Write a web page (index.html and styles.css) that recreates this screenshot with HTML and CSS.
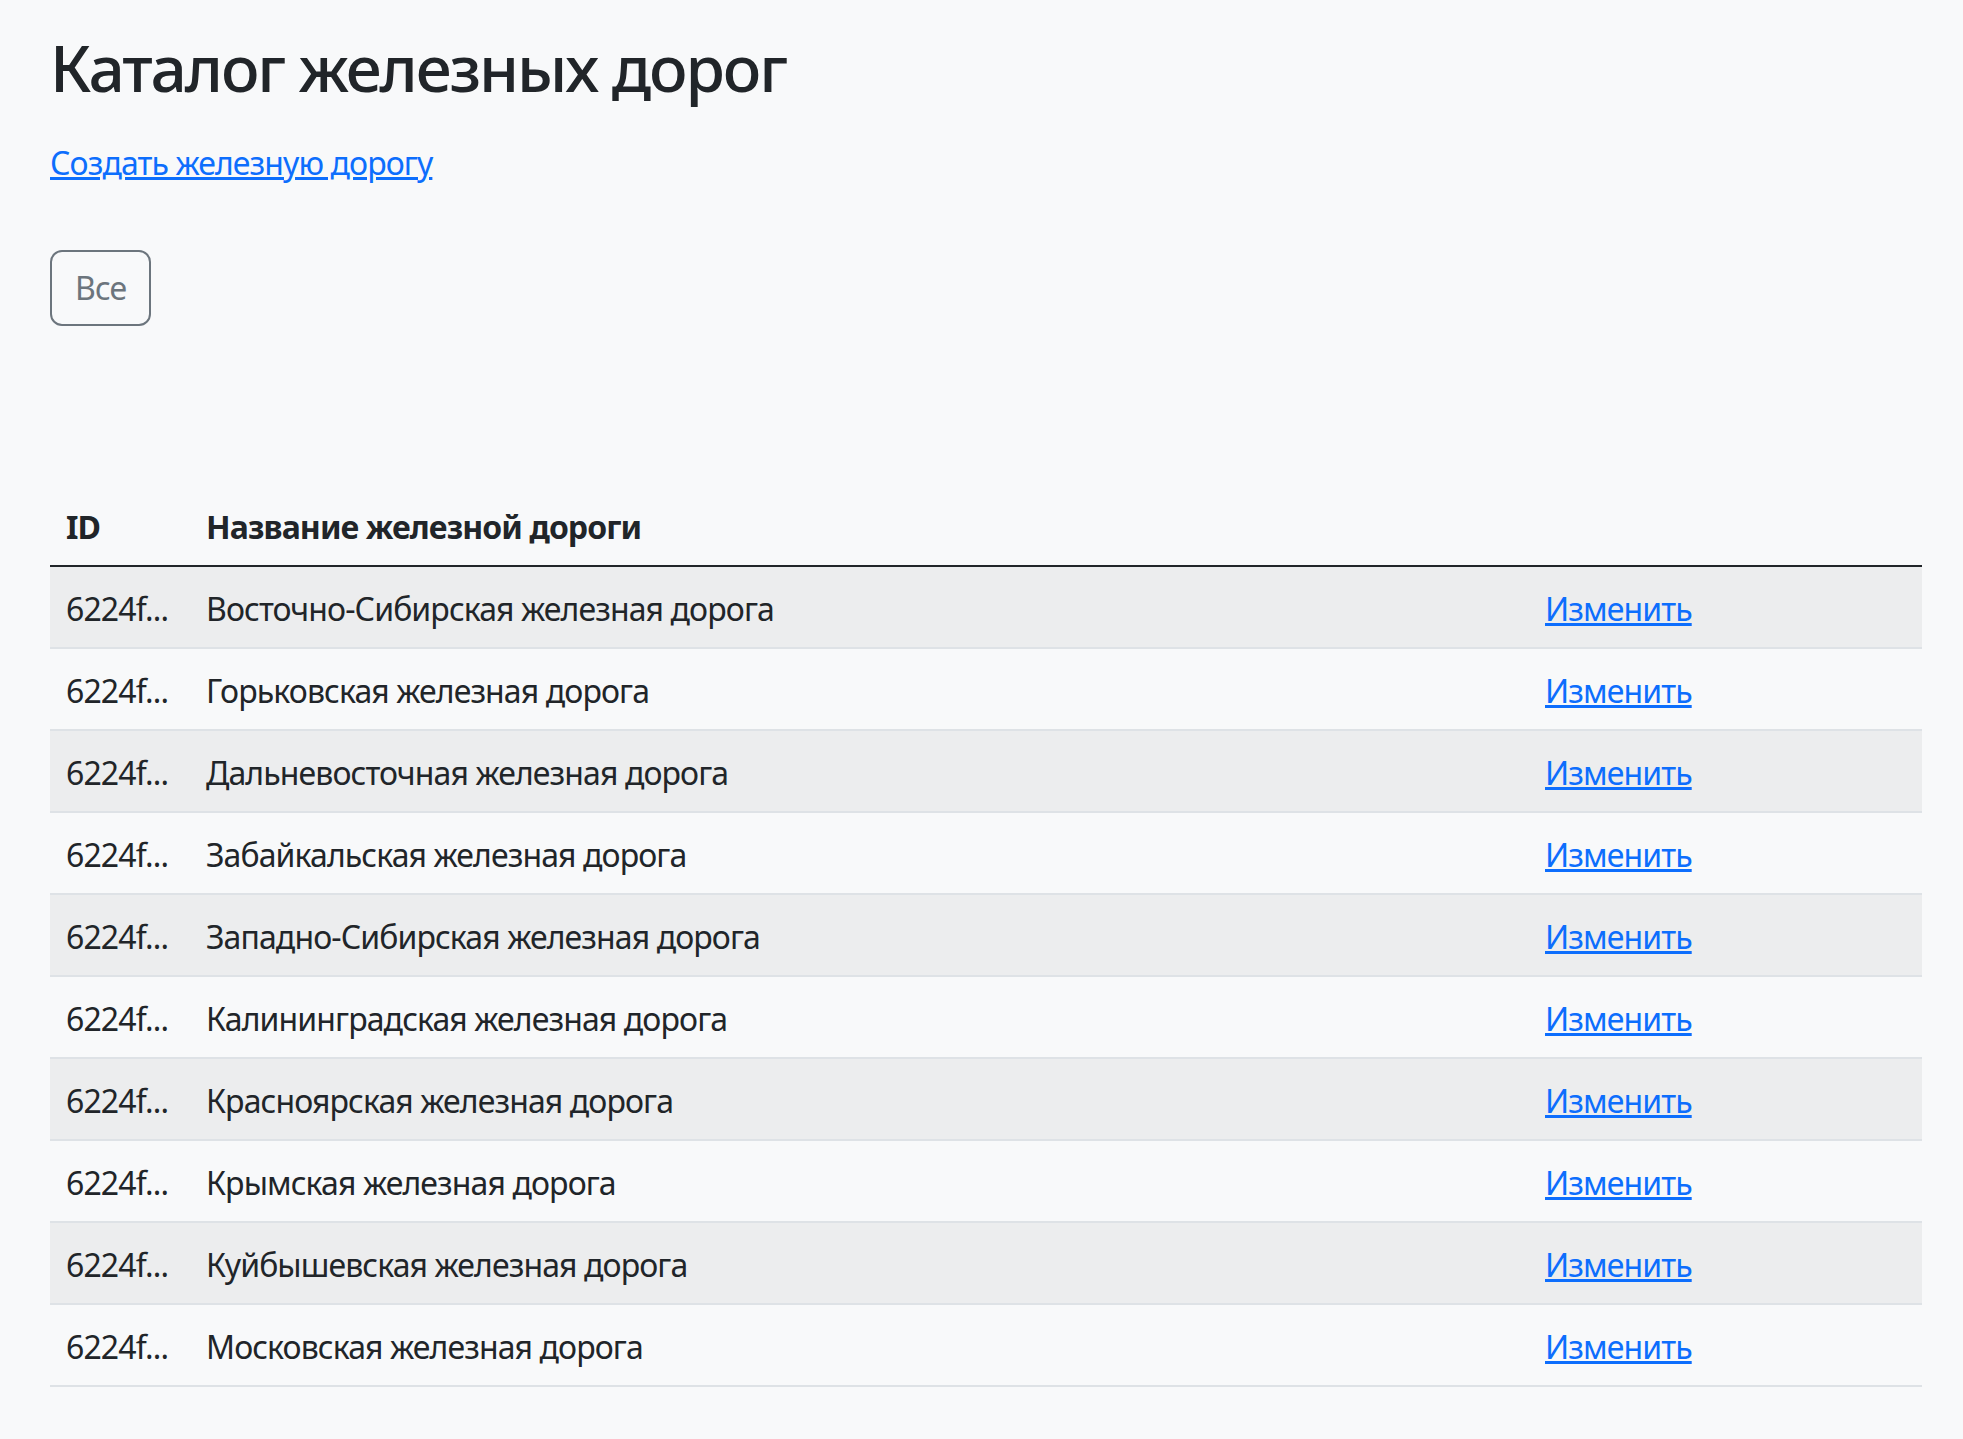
FILE: index.html
```html
<!DOCTYPE html>
<html lang="ru">
  <head>
    <meta charset="UTF-8" />
    <meta name="viewport" content="width=device-width, initial-scale=1.0" />
    <title>Каталог железных дорог</title>
    <link rel="stylesheet" href="styles.css">
  </head>
  <body>
    <div class="page">
      <h1 class="title">Каталог железных дорог</h1>
      <p class="create"><a href="#">Создать железную дорогу</a></p>
      <div class="filters">
        <button class="btn-filter">Все</button>
      </div>
      <table class="roads">
        <thead>
          <tr>
            <th class="col-id">ID</th>
            <th class="col-name">Название железной дороги</th>
            <th class="col-action"></th>
          </tr>
        </thead>
        <tbody>
          <tr><td>6224f...</td><td>Восточно-Сибирская железная дорога</td><td><a href="#">Изменить</a></td></tr>
          <tr><td>6224f...</td><td>Горьковская железная дорога</td><td><a href="#">Изменить</a></td></tr>
          <tr><td>6224f...</td><td>Дальневосточная железная дорога</td><td><a href="#">Изменить</a></td></tr>
          <tr><td>6224f...</td><td>Забайкальская железная дорога</td><td><a href="#">Изменить</a></td></tr>
          <tr><td>6224f...</td><td>Западно-Сибирская железная дорога</td><td><a href="#">Изменить</a></td></tr>
          <tr><td>6224f...</td><td>Калининградская железная дорога</td><td><a href="#">Изменить</a></td></tr>
          <tr><td>6224f...</td><td>Красноярская железная дорога</td><td><a href="#">Изменить</a></td></tr>
          <tr><td>6224f...</td><td>Крымская железная дорога</td><td><a href="#">Изменить</a></td></tr>
          <tr><td>6224f...</td><td>Куйбышевская железная дорога</td><td><a href="#">Изменить</a></td></tr>
          <tr><td>6224f...</td><td>Московская железная дорога</td><td><a href="#">Изменить</a></td></tr>
        </tbody>
      </table>
    </div>
  </body>
</html>
```

FILE: styles.css
```css
body {
  margin: 0;
  background-color: #f8f9fa;
  color: #212529;
  font-family: "Noto Sans", "Open Sans", sans-serif;
  font-size: 32px;
  line-height: 1.5;
  letter-spacing: -0.028em;
}
.page {
  padding: 30px 41px 60px 50px;
}
.title {
  font-size: 64px;
  font-weight: 500;
  line-height: 1.2;
  letter-spacing: -0.033em;
  margin: 0 0 32px;
}
.create {
  margin: 0 0 63px;
}
a {
  color: #0d6efd;
  text-decoration: underline;
}
.filters {
  margin-bottom: 159px;
}
.btn-filter {
  font: inherit;
  line-height: 1.5;
  letter-spacing: inherit;
  color: #6c757d;
  background: transparent;
  border: 2px solid #6c757d;
  border-radius: 12px;
  padding: 12px 23px;
}
.roads {
  width: 100%;
  border-collapse: collapse;
}
.roads th,
.roads td {
  padding: 18px 16px 14px;
  text-align: left;
  vertical-align: top;
}
.roads th {
  font-weight: 700;
  border-bottom: 2px solid #212529;
}
.roads td {
  border-bottom: 2px solid #dee2e6;
}
.roads tbody tr:nth-child(odd) td {
  background-color: #ecedee;
}
.col-id {
  width: 108px;
}
.col-name {
  width: 1307px;
}
```
